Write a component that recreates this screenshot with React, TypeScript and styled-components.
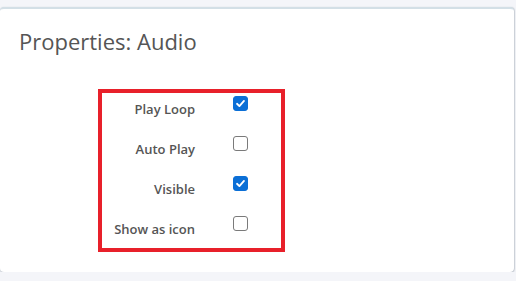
import React from "react";
import styled, { createGlobalStyle } from "styled-components";

const Global = createGlobalStyle`
  html, body { margin: 0; padding: 0; background: #f4f5f9; }
  body { font-family: "Open Sans", "Liberation Sans", sans-serif; }
`;

const Page = styled.div`
  padding-top: 7px;
`;

const Card = styled.section`
  box-sizing: border-box;
  width: 514px;
  height: 265px;
  background: #ffffff;
  border-top: 2px solid #d3dfe6;
  border-radius: 4px;
  box-shadow: 0 1px 2px rgba(60, 80, 100, 0.35), 1px 0 1px rgba(60, 80, 100, 0.15);
  padding: 17px 0 0 0;
`;

const Title = styled.h2`
  margin: 0 0 0 19px;
  font-weight: 400;
  font-size: 22px;
  line-height: 30px;
  color: #555555;
`;

const Highlight = styled.div`
  box-sizing: border-box;
  margin: 33px 0 0 98px;
  width: 187px;
  height: 163px;
  border: 4px solid #e8202a;
  padding: 2px 0 0 0;
  display: grid;
  grid-template-columns: 93px 15px;
  column-gap: 38px;
  grid-auto-rows: 30px;
  row-gap: 10px;
`;

const Label = styled.span`
  text-align: right;
  font-size: 13px;
  font-weight: 600;
  line-height: 29px;
  color: #555555;
  white-space: nowrap;
`;

const Box = styled.span<{ $checked: boolean }>`
  box-sizing: border-box;
  margin-top: 1px;
  width: 15px;
  height: 15px;
  border-radius: 3px;
  border: 1px solid ${(p) => (p.$checked ? "#0b6fd6" : "#7a7a7a")};
  background: ${(p) => (p.$checked ? "#0b6fd6" : "#ffffff")};
  display: flex;
  align-items: center;
  justify-content: center;
`;

const Check = () => (
  <svg width="11" height="11" viewBox="0 0 12 12">
    <path d="M2.2 6.3 L4.8 8.8 L9.8 3.2" fill="none" stroke="#fff" strokeWidth="2" strokeLinecap="round" strokeLinejoin="round" />
  </svg>
);

const rows = [
  { label: "Play Loop", checked: true },
  { label: "Auto Play", checked: false },
  { label: "Visible", checked: true },
  { label: "Show as icon", checked: false },
];

export default function App() {
  return (
    <Page>
      <Global />
      <Card>
        <Title>Properties: Audio</Title>
        <Highlight>
          {rows.map((r) => (
            <React.Fragment key={r.label}>
              <Label>{r.label}</Label>
              <Box $checked={r.checked} role="checkbox" aria-checked={r.checked}>
                {r.checked && <Check />}
              </Box>
            </React.Fragment>
          ))}
        </Highlight>
      </Card>
    </Page>
  );
}
